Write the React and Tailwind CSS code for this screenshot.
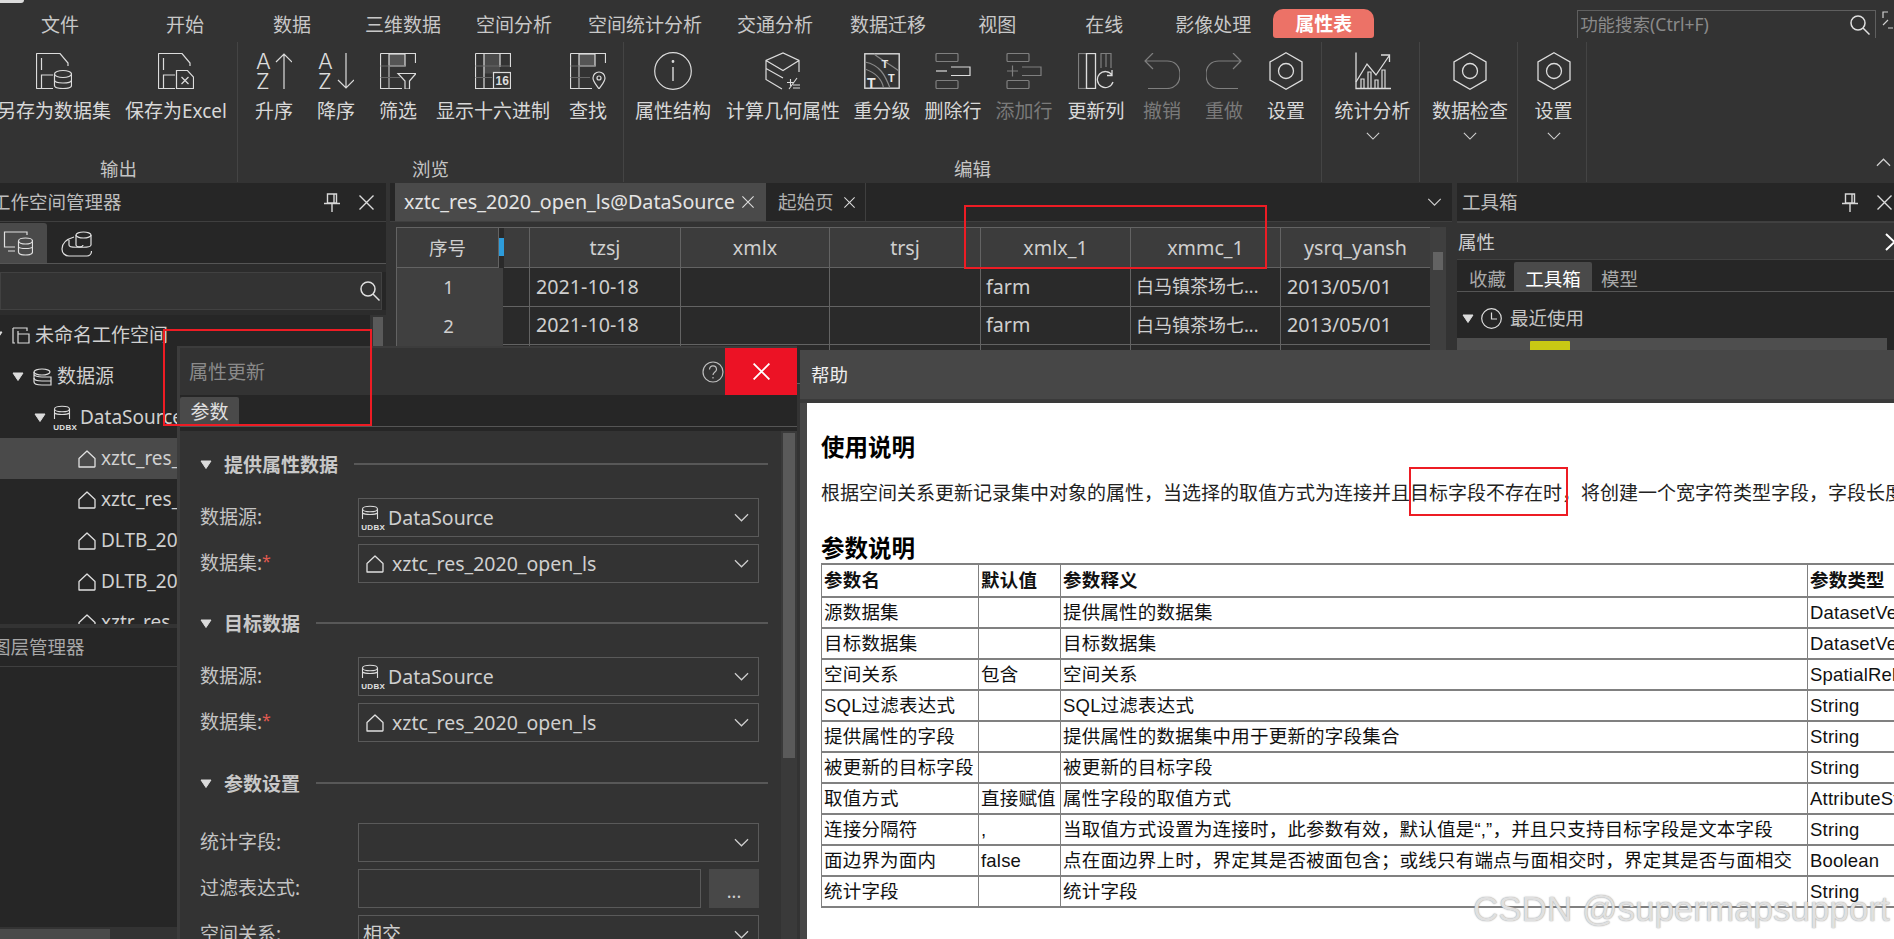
const S = ({ c = "#dcdcdc", w = 36, h = 36, sw = 1.2, vb = "0 0 36 36", children }) => (
  <svg width={w} height={h} viewBox={vb} fill="none" stroke={c} strokeWidth={sw} className="shrink-0 block">{children}</svg>
);
const G = "#7f7f7f";
const DocBase = ({ top = 13 }) => (
  <path d={`M17 35.5H1a.5.5 0 0 1-.5-.5V1A.5.5 0 0 1 1 .5H24L32 10V${top}M5.5 5V17M17 22H5.5V35.5`} />
);
const FileDb = () => (
  <S><DocBase /><ellipse cx="27" cy="21" rx="8.5" ry="3.5" /><path d="M18.500 21V32.500C18.500 34.500 22 35.500 27 35.500S35.500 34.500 35.500 32.500V21M18.500 27C18.500 29 22 30 27 30S35.500 29 35.500 27" /></S>
);
const FileX = () => (
  <S><DocBase /><path d="M18.500 35.500V17.500H29.500L35.500 24V35.500Z" /><path d="M23.500 24L30.500 31M30.500 24L23.500 31" /></S>
);
const SortIcon = ({ up }) => (
  <S>
    <text x="0" y="16" fontSize="22" fill="#dcdcdc" stroke="none" fontFamily="Inter" fontWeight="300">A</text>
    <text x="0" y="35.500" fontSize="22" fill="#dcdcdc" stroke="none" fontFamily="Inter" fontWeight="300">Z</text>
    {up ? <path d="M28 36V1M20 9L28 1L36 9" /> : <path d="M28 0V35M20 27L28 35L36 27" />}
  </S>
);
const TableBase = () => (
  <>
    <rect x="9" y="1" width="16" height="12" fill="#555" stroke="#dcdcdc" />
    <path d="M.5 .5H35.500V10M.5 .5V35.500H22" />
    <path d="M9 13V35.500" stroke="#bbb" />
    <path d="M.5 13H25M.5 24.500H20" stroke="#666" />
  </>
);
const Filter = () => (
  <S><TableBase /><path d="M18 20.500H36L29.500 28V36H25V28Z" /></S>
);
const Hex16 = () => (
  <S>
    <rect x="9" y=".5" width="16" height="20" fill="#4a4a4a" stroke="none" />
    <path d="M.5 .5H35.500V14M.5 .5V35.500H18M9 .5V35.500M25 .5V14" />
    <path d="M.5 13H35M.5 24.500H17" stroke="#666" />
    <rect x="18.500" y="19.500" width="17" height="16" />
    <text x="20.500" y="32" fontSize="12" fontWeight="700" fill="#dcdcdc" stroke="none" fontFamily="Liberation Sans">16</text>
  </S>
);
const Locate = () => (
  <S><TableBase />
    <path d="M29 36C26 31.500 23 28.500 23 25A6 6 0 0 1 35 25C35 28.500 32 31.500 29 36Z" fill="#333" />
    <circle cx="29" cy="25" r="2" />
  </S>
);
const Info = () => (
  <S w={38} h={38} vb="0 0 38 38"><circle cx="19" cy="19" r="18.300" /><path d="M19 15V29" strokeWidth="1.400" /><circle cx="19" cy="9.500" r=".8" fill="#dcdcdc" /></S>
);
const Cube = () => (
  <S w={36} h={38} vb="0 0 36 38">
    <path d="M18 26L1 16.500V8.500L18 1L34 8.500V20M1 8.500L18 18.500L34 8.500M1 10V27.500L17 37" />
    <path d="M22 30.500H29M25.500 27V34M24 37L32 26M28 36H35M28 33H35" strokeWidth="1.100" />
  </S>
);
const Reclass = () => (
  <S>
    <rect x=".8" y=".8" width="34.400" height="34.400" strokeWidth="1.400" />
    <path d="M1 9C16 12 21 22 26 35M1 16C12 20 18 26 19.500 35M10 1C19 8 27 12 35 18" stroke="#888" />
    <text x="17.500" y="15" fontSize="11" fontWeight="700" fill="#e6e6e6" stroke="none" fontFamily="Liberation Sans">T</text>
    <text x="24" y="29" fontSize="11" fontWeight="700" fill="#e6e6e6" stroke="none" fontFamily="Liberation Sans">T</text>
    <text x="3" y="35" fontSize="14" fontWeight="700" fill="#e6e6e6" stroke="none" fontFamily="Liberation Sans">T</text>
  </S>
);
const RowEdit = ({ c, plus }) => (
  <S c={c}>
    <rect x="1" y=".5" width="22" height="8" rx="1" stroke={G} />
    <rect x="1" y="27.500" width="22" height="8" rx="1" stroke={G} />
    <path d="M16 14H35V22.500H16" />
    {plus ? <path d="M1 18H12M6.500 12.500V23.500" /> : <path d="M1 18H12" />}
  </S>
);
const UpdateCol = () => (
  <S>
    <rect x=".5" y=".5" width="8" height="35" stroke={G} />
    <rect x="8.500" y=".5" width="9" height="35" strokeWidth="1.300" />
    <path d="M23 15V.5H33V15M28 .5V14" stroke={G} />
    <path d="M34 22A8 8 0 1 0 35 29M34 17V22.500H29" strokeWidth="1.300" />
  </S>
);
const Undo = ({ redo }) => (
  <S c={G}>
    {redo
      ? <path d="M35 8H13C5 8 0 13 0 21.500S5 35.500 13 35.500H32M27 0L35 8L27 16" />
      : <path d="M1 8H23C31 8 36 13 36 21.500S31 35.500 23 35.500H4M9 0L1 8L9 16" />}
  </S>
);
const Hex = ({ c = "#dcdcdc" }) => (
  <S c={c} w={36} h={38} vb="0 0 36 38">
    <path d="M18 .8L34 10V28L18 37.200L2 28V10Z" strokeWidth="1.300" /><circle cx="18" cy="19" r="7.500" strokeWidth="1.300" />
  </S>
);
const Chart = () => (
  <S w={38} h={38} vb="0 0 38 38">
    <path d="M2 .5V36.500H37" strokeWidth="1.300" />
    <path d="M2 30L13 12L22 23L35 4M27 3H35.500V10" strokeWidth="1.300" />
    <path d="M7 36V27H10V36M14 36V20H17V36M21 36V28H24V36M28 36V18H31V36" />
  </S>
);
const Chevron = ({ c = "#cfcfcf", w = 16, h = 9 }) => (
  <svg width={w} height={h} viewBox="0 0 16 9" fill="none" stroke={c} strokeWidth="1.300" className="block shrink-0"><path d="M1 1L8 8L15 1" /></svg>
);
const Pin = () => (
  <S w={16} h={19} vb="0 0 16 19" c="#d8d8d8" sw={1.400}>
    <path d="M3.500 1H12.500V10H3.500ZM10 1V10M0 10.500H16M8 11V19" />
  </S>
);
const Close = ({ s = 15, c = "#dcdcdc", sw = 1.400 }) => (
  <svg width={s} height={s} viewBox="0 0 15 15" fill="none" stroke={c} strokeWidth={sw} className="block shrink-0"><path d="M.5 .5L14.500 14.500M14.500 .5L.5 14.500" /></svg>
);
const SearchI = () => (
  <S w={20} h={20} vb="0 0 20 20" c="#e0e0e0" sw={1.500}><circle cx="8" cy="8" r="7" /><path d="M13 13L19.500 19.500" /></S>
);
const Caret = () => (
  <svg width="12" height="9" viewBox="0 0 12 9" className="block shrink-0"><path d="M1 1H11L6 8.500Z" fill="#dcdcdc" stroke="#dcdcdc" strokeLinejoin="round" /></svg>
);
const Ds = ({ w = 18, h = 18, c = "#e0e0e0" }) => (
  <S w={w} h={h} vb="0 0 18 18" c={c} sw={1.300}><path d="M1 17V8.500L9 1L17 8.500V16.500C17 16.800 16.800 17 16.500 17Z" strokeLinejoin="round" /></S>
);
const Udbx = () => (
  <svg width="24" height="26" viewBox="0 0 24 26" fill="none" stroke="#dcdcdc" strokeWidth="1.100" className="block shrink-0">
    <ellipse cx="9" cy="4" rx="7.500" ry="2.800" />
    <path d="M1.500 4V14M16.500 4V14M1.500 8C4 10 14 10 16.500 8" />
    <text x=".3" y="24.500" fontSize="8" fontWeight="700" fill="#e0e0e0" stroke="none" fontFamily="Liberation Sans" letterSpacing=".3">UDBX</text>
  </svg>
);

const tabs = [
  ["文件", "ml-[41px]"], ["开始", "ml-[87px]"], ["数据", "ml-[69px]"], ["三维数据", "ml-[54px]"], ["空间分析", "ml-[35px]"],
  ["空间统计分析", "ml-[36px]"], ["交通分析", "ml-[35px]"], ["数据迁移", "ml-[37px]"], ["视图", "ml-[52px]"], ["在线", "ml-[69px]"], ["影像处理", "ml-[52px]"],
];

const Item = ({ w, icon, label, gray, drop }) => (
  <div className={`${w} shrink-0 flex flex-col items-center`}>
    <div className="h-[38px] flex items-center">{icon}</div>
    <div className={`mt-[8px] h-[26px] leading-[26px] whitespace-nowrap text-[19px] ${gray ? "text-[#7a7a7a]" : "text-[#d8d8d8]"}`}>{label}</div>
    {drop && <div className="mt-[8px]"><Chevron w={14} h={8} c="#d0d0d0" /></div>}
  </div>
);
const Group = ({ w, label, children }) => (
  <div className={`${w} shrink-0 h-[140px] border-r border-[#444] relative flex`}>
    {children}
    {label && <div className="absolute left-0 right-0 bottom-0 text-center text-[18.5px] leading-[26px] text-[#c4c4c4]">{label}</div>}
  </div>
);

const TreeRow = ({ pl, caret, icon, text, sel, caretCls = "mr-[9px]", textCls = "ml-[5px]" }) => (
  <div className={`h-[41px] shrink-0 flex items-center whitespace-nowrap text-[19px] text-[#d0d0d0] ${pl} ${sel ? "bg-[#4a4a4a]" : ""}`}>
    {caret && <span className={caretCls}><Caret /></span>}
    {icon}
    <span className={textCls}>{text}</span>
  </div>
);

const Field = ({ children, w = "w-[401px]" }) => (
  <div className={`${w} h-[39px] border border-[#5a5a5a] flex items-center pl-[2px] pr-[9px] shrink-0`}>
    {children}
  </div>
);
const Line = ({ label, star, children, cls = "mt-[7px]" }) => (
  <div className={`flex items-center ${cls}`}>
    <div className="w-[158px] shrink-0 text-[19px] text-[#c4c4c4] whitespace-nowrap">{label}{star && <span className="text-[#e05a50] align-top text-[16px]">*</span>}</div>
    {children}
  </div>
);
const Sec = ({ title, cls = "" }) => (
  <div className={`h-[28px] flex items-center ${cls}`}>
    <Caret />
    <div className="ml-[12px] pt-[3px] font-bold text-[19px] text-[#c8c8c8] whitespace-nowrap">{title}</div>
    <div className="flex-1 h-[2px] bg-[#585858] ml-[16px] mr-[13px]"></div>
  </div>
);
const UdbxVal = () => (
  <>
    <Udbx />
    <span className="ml-[3px] text-[19.5px] text-[#cfcfcf] flex-1">DataSource</span>
    <Chevron w={15} h={9} />
  </>
);
const DsVal = () => (
  <>
    <span className="ml-[5px]"><Ds /></span>
    <span className="ml-[8px] text-[19.5px] text-[#cfcfcf] flex-1">xztc_res_2020_open_ls</span>
    <Chevron w={15} h={9} />
  </>
);

const Cell = ({ children, cls = "", size = "text-[19.7px]" }) => (
  <div className={`border-r border-b border-[#636363] flex items-center overflow-hidden whitespace-nowrap text-[#cfcfcf] ${size} ${cls}`}>{children}</div>
);
const Row = ({ n }) => (
  <div className="grid grid-cols-[106px_27px_151px_149px_151px_150px_150px_150px] h-[38.500px]">
    <div className="bg-[#404040] flex items-center justify-center text-[18.5px] text-[#cfcfcf] pr-[3px]">{n}</div>
    <Cell cls="bg-[#2a2a2a]" />
    <Cell cls="bg-[#2a2a2a] pl-[6px]">2021-10-18</Cell>
    <Cell cls="bg-[#2a2a2a]" />
    <Cell cls="bg-[#2a2a2a]" />
    <Cell cls="bg-[#2a2a2a] pl-[5px]">farm</Cell>
    <Cell cls="bg-[#2a2a2a] pl-[5px]" size="text-[18px]">白马镇茶场七...</Cell>
    <Cell cls="bg-[#2a2a2a] pl-[6px]">2013/05/01</Cell>
  </div>
);

const helpRows = [
  ["源数据集", "", "提供属性的数据集", "DatasetVector"],
  ["目标数据集", "", "目标数据集", "DatasetVector"],
  ["空间关系", "包含", "空间关系", "SpatialRelationship"],
  ["SQL过滤表达式", "", "SQL过滤表达式", "String"],
  ["提供属性的字段", "", "提供属性的数据集中用于更新的字段集合", "String"],
  ["被更新的目标字段", "", "被更新的目标字段", "String"],
  ["取值方式", "直接赋值", "属性字段的取值方式", "AttributeStatisticsMode"],
  ["连接分隔符", ",", "当取值方式设置为连接时，此参数有效，默认值是“,”，并且只支持目标字段是文本字段", "String"],
  ["面边界为面内", "false", "点在面边界上时，界定其是否被面包含；或线只有端点与面相交时，界定其是否与面相交", "Boolean"],
  ["统计字段", "", "统计字段", "String"],
];
const Td = ({ children, Tag = "td" }) => (
  <Tag className={`border-x border-y-2 border-[#808080] px-[2px] py-0 overflow-hidden whitespace-nowrap text-left text-[18.5px] tracking-[.2px] ${Tag === "th" ? "font-bold" : "font-normal"}`}>{children}</Tag>
);

const Red = ({ cls }) => <div className={`absolute border-2 border-[#ed1c24] pointer-events-none ${cls}`}></div>;

export default function App() {
  return (
    <div className="relative w-[1894px] h-[939px] overflow-hidden bg-[#333333] text-[#d0d0d0] font-['Noto_Sans','Noto_Sans_CJK_SC',sans-serif]">
      <div className="absolute left-0 top-0 w-[24px] h-[3px] bg-[#dcdcdc] rounded-br-[4px]"></div>

      <div className="h-[38px] flex items-end text-[19px] text-[#c8c8c8]">
        {tabs.map(([t, m]) => (
          <div key={t} className={`${m} h-[38px] leading-[50px] whitespace-nowrap pb-[2px]`}>{t}</div>
        ))}
        <div className="ml-[22px] w-[101px] h-[29px] bg-[#ec7267] rounded-t-[10px] rounded-b-[3px] text-center text-white font-bold leading-[31px]">属性表</div>
        <div className="ml-[203px] w-[299px] h-[28px] border-x border-t border-[#5f5f5f] flex items-center pl-[2px] pr-[5px] text-[#8a8a8a] text-[17.5px]">
          <span className="flex-1 whitespace-nowrap">功能搜索(Ctrl+F)</span>
          <SearchI />
        </div>
        <div className="ml-[6px] mb-[9px]">
          <svg width="12" height="18" viewBox="0 0 12 18" fill="none" stroke="#d0d0d0" strokeWidth="1.200" className="block"><path d="M6 1H1V7M11 17H6M1 14L6 9" /></svg>
        </div>
      </div>

      <div className="h-[145px] pt-[4px] flex relative">
        <Group w="w-[238px]" label="输出">
          <div className="flex pt-[10px]">
            <Item w="w-[108px]" icon={<FileDb />} label="另存为数据集" />
            <Item w="w-[108px] ml-[14px]" icon={<FileX />} label="保存为Excel" />
          </div>
        </Group>
        <Group w="w-[386px]" label="浏览">
          <div className="flex pt-[10px] pl-[5px]">
            <Item w="w-[62px]" icon={<SortIcon up />} label="升序" />
            <Item w="w-[62px]" icon={<SortIcon />} label="降序" />
            <Item w="w-[62px]" icon={<Filter />} label="筛选" />
            <Item w="w-[128px]" icon={<Hex16 />} label="显示十六进制" />
            <Item w="w-[62px]" icon={<Locate />} label="查找" />
          </div>
        </Group>
        <Group w="w-[698px]" label="编辑">
          <div className="flex pt-[10px]">
            <Item w="w-[98px]" icon={<Info />} label="属性结构" />
            <Item w="w-[122px]" icon={<Cube />} label="计算几何属性" />
            <Item w="w-[76px]" icon={<Reclass />} label="重分级" />
            <Item w="w-[66px]" icon={<RowEdit c="#dcdcdc" />} label="删除行" />
            <Item w="w-[76px]" icon={<RowEdit c={G} plus />} label="添加行" gray />
            <Item w="w-[68px]" icon={<UpdateCol />} label="更新列" />
            <Item w="w-[64px]" icon={<Undo />} label="撤销" gray />
            <Item w="w-[60px]" icon={<Undo redo />} label="重做" gray />
            <Item w="w-[64px]" icon={<Hex />} label="设置" />
          </div>
        </Group>
        <Group w="w-[98px]">
          <div className="flex pt-[10px] pl-[3px]"><Item w="w-[95px]" icon={<Chart />} label="统计分析" drop /></div>
        </Group>
        <Group w="w-[98px]">
          <div className="flex pt-[10px] pl-[2px]"><Item w="w-[96px]" icon={<Hex />} label="数据检查" drop /></div>
        </Group>
        <Group w="w-[69px]">
          <div className="flex pt-[10px] pl-[2px]"><Item w="w-[67px]" icon={<Hex />} label="设置" drop /></div>
        </Group>
        <div className="ml-auto mr-[3px] mt-[116px]"><svg width="15" height="9" viewBox="0 0 16 9" fill="none" stroke="#d0d0d0" strokeWidth="1.300" className="block"><path d="M1 8L8 1L15 8" /></svg></div>
      </div>

      <div className="h-[756px] flex">
        {/* left column */}
        <div className="w-[386px] shrink-0 flex flex-col bg-[#262626]">
          <div className="h-[39px] shrink-0 border-b border-[#3f3f3f] flex items-center text-[18.5px] text-[#bdbdbd]">
            <span className="-ml-[8px] whitespace-nowrap">工作空间管理器</span>
            <span className="ml-[202px]"><Pin /></span>
            <span className="ml-[19px]"><Close /></span>
          </div>
          <div className="h-[42px] shrink-0 border-b border-[#555] flex items-end">
            <div className="w-[47px] h-[40px] bg-[#4a4a4a] rounded-tr-[3px] flex items-center pl-[3px]">
              <S w={30} h={26} vb="0 0 30 26" c="#e0e0e0"><path d="M24 5V2H1.500V17H12M5 21H12" /><ellipse cx="22.500" cy="11" rx="7" ry="3" /><path d="M15.500 11V22C15.500 24 19 25 22.500 25S29.500 24 29.500 22V11M15.500 17C17 19 28 19 29.500 17" /></S>
            </div>
            <div className="ml-[14px] mb-[6px]">
              <S w={31} h={26} vb="0 0 31 26" c="#e0e0e0"><path d="M13 6C6 8 1 12 1 18C1 22 4 25 8 25H26C28.500 25 30.500 23 30.500 20M8 9V14C8 17 22 17 22 14" /><ellipse cx="22.500" cy="4" rx="7.500" ry="3" /><path d="M15 4V14C15 17 30 17 30 14V4" /></S>
            </div>
          </div>
          <div className="h-[8px] shrink-0 bg-[#2c2c2c]"></div>
          <div className="h-[38px] w-[382px] shrink-0 bg-[#333] border border-[#414141] flex items-center justify-end pr-[1px]"><SearchI /></div>
          <div className="h-[5px] shrink-0 bg-[#2c2c2c]"></div>
          <div className="h-[309px] shrink-0 flex overflow-hidden">
            <div className="flex-1 flex flex-col overflow-hidden">
              <TreeRow pl="pl-0" caret caretCls="-ml-[9px] mr-[9px]" icon={<S w={18} h={18} vb="0 0 18 18" c="#dcdcdc"><path d="M1 1H15V4M1 1V16H3M6 16H17V7H6ZM6 16V4" /></S>} text="未命名工作空间" />
              <TreeRow pl="pl-[12px]" caret icon={<S w={19} h={18} vb="0 0 19 18" c="#dcdcdc"><ellipse cx="9" cy="4" rx="8" ry="3" /><path d="M1 4V14C1 16 4 17 9 17H18V9H9C5 9 1 8 1 6" /><path d="M1 10C1 12 4 13 9 13H18" /></S>} text="数据源" />
              <TreeRow pl="pl-[34px]" caret caretCls="mr-[7px]" textCls="ml-[3px]" icon={<Udbx />} text="DataSource" />
              <TreeRow sel pl="pl-[78px]" icon={<Ds />} text="xztc_res_2020_open_ls" />
              <TreeRow pl="pl-[78px]" icon={<Ds />} text="xztc_res_2020_open" />
              <TreeRow pl="pl-[78px]" icon={<Ds />} text="DLTB_2020_open" />
              <TreeRow pl="pl-[78px]" icon={<Ds />} text="DLTB_2021_open" />
              <TreeRow pl="pl-[78px]" icon={<Ds />} text="xztr_res_2020" />
            </div>
            <div className="w-[16px] shrink-0 bg-[#333] pt-[2px] px-[3px]"><div className="h-[80px] bg-[#5a5a5a]"></div></div>
          </div>
          <div className="h-[4px] shrink-0 bg-[#333]"></div>
          <div className="h-[39px] shrink-0 border-b border-[#3f3f3f] flex items-center text-[18.5px] text-[#a8a8a8]"><span className="-ml-[8px] whitespace-nowrap">图层管理器</span></div>
          <div className="flex-1"></div>
          <div className="h-[12px] shrink-0 bg-[#333] pt-[2px]"><div className="w-[110px] h-full bg-[#4a4a4a]"></div></div>
        </div>

        {/* center column */}
        <div className="ml-[4px] w-[1062px] shrink-0 flex flex-col">
          <div className="h-[39px] shrink-0 bg-[#262626] border-b border-[#3f3f3f] flex items-stretch pl-[5px]">
            <div className="w-[371px] bg-[#4a4a4a] flex items-center pl-[9px] text-[#e4e4e4] text-[19.7px]">
              <span className="whitespace-nowrap">xztc_res_2020_open_ls@DataSource</span>
              <span className="ml-auto mr-[12px]"><Close s={12} /></span>
            </div>
            <div className="w-[100px] border-r border-[#3f3f3f] flex items-center pl-[12px] text-[#b0b0b0] text-[18.5px]">
              <span className="whitespace-nowrap">起始页</span>
              <span className="ml-[10px]"><Close s={11} /></span>
            </div>
            <div className="ml-auto mr-[10px] self-center"><Chevron w={15} h={8} /></div>
          </div>
          <div className="h-[5px] shrink-0"></div>
          <div className="ml-[6px] flex">
            <div className="w-[1034px] shrink-0 border-t border-l border-[#636363]">
              <div className="grid grid-cols-[102px_5px_26px_151px_149px_151px_150px_150px_150px] h-[40px] bg-[#3c3c3c]">
                <Cell cls="justify-center" size="text-[18.5px]">序号</Cell>
                <div className="bg-[#2a2a2a] pt-[10px]"><div className="h-[18px] bg-[#2d9cdb]"></div></div>
                <Cell />
                <Cell cls="justify-center">tzsj</Cell>
                <Cell cls="justify-center">xmlx</Cell>
                <Cell cls="justify-center">trsj</Cell>
                <Cell cls="justify-center">xmlx_1</Cell>
                <Cell cls="justify-center">xmmc_1</Cell>
                <Cell cls="justify-center">ysrq_yansh</Cell>
              </div>
              <Row n="1" />
              <Row n="2" />
              <Row n="3" />
            </div>
            <div className="w-[16px] shrink-0 bg-[#3f3f3f] pt-[25px] px-[3px]"><div className="h-[18px] bg-[#636363]"></div></div>
          </div>
        </div>

        {/* right column */}
        <div className="ml-[5px] w-[437px] shrink-0 flex flex-col bg-[#262626]">
          <div className="h-[39px] shrink-0 border-b border-[#3f3f3f] flex items-center text-[18.5px] text-[#bdbdbd]">
            <span className="ml-[5px] whitespace-nowrap">工具箱</span>
            <span className="ml-[324px]"><Pin /></span>
            <span className="ml-[19px]"><Close /></span>
          </div>
          <div className="h-[38px] shrink-0 bg-[#333] border-y border-[#414141] flex items-center text-[18.5px] text-[#cfcfcf] pt-[1px]">
            <span className="ml-[1px]">属性</span>
            <span className="ml-auto -mr-[2px]"><svg width="11" height="18" viewBox="0 0 11 18" fill="none" stroke="#ffffff" strokeWidth="2" className="block"><path d="M1 1L9.500 9L1 17" /></svg></span>
          </div>
          <div className="h-[32px] shrink-0 border-b border-[#555] flex items-end text-[18.5px] text-[#a8a8a8]">
            <span className="ml-[12px] h-[29px] leading-[33px]">收藏</span>
            <span className="ml-[8px] w-[78px] h-[29px] leading-[33px] bg-[#4a4a4a] text-center text-white rounded-t-[2px]">工具箱</span>
            <span className="ml-[9px] h-[29px] leading-[33px]">模型</span>
          </div>
          <div className="h-[46px] shrink-0 flex items-center text-[18.5px] text-[#c4c4c4] pl-[5px] pr-[7px] pt-[6px]">
            <Caret />
            <span className="ml-[7px]"><S w={21} h={21} vb="0 0 21 21" c="#dcdcdc"><circle cx="10.500" cy="10.500" r="9.800" /><path d="M10.500 4.500V11H16" /></S></span>
            <span className="ml-[8px]">最近使用</span>
          </div>
          <div className="h-[13px] shrink-0 bg-[#4e4e4e] pl-[73px] pt-[3px] mr-[7px]"><div className="w-[40px] h-full bg-[#c8c814] rounded-t-[1px]"></div></div>
        </div>
      </div>

      {/* 属性更新 dialog */}
      <div className="absolute left-[177px] top-[346px] w-[620px] h-[593px] bg-[#333] border-l-[3px] border-t-2 border-[#3c3c3c] flex flex-col">
        <div className="h-[47px] shrink-0 flex items-center text-[19px] text-[#8a8a8a]">
          <span className="ml-[9px] pt-[1px]">属性更新</span>
          <span className="ml-auto mr-[1px]"><svg width="22" height="22" viewBox="0 0 22 22" fill="none" stroke="#bdbdbd" strokeWidth="1.200" className="block"><circle cx="11" cy="11" r="10" /><path d="M7.500 8.500C7.500 3.500 14.500 4 14.500 8.500C14.500 11 11 11 11 14M11 16V17.500" /></svg></span>
          <div className="w-[72px] h-[47px] bg-[#ec1225] flex items-center justify-center"><Close s={17} c="#ffffff" sw={1.600} /></div>
        </div>
        <div className="h-[32px] shrink-0 bg-[#262626] border-b border-[#555] flex items-end">
          <div className="w-[59px] h-[29px] bg-[#4a4a4a] rounded-t-[2px] text-center text-[19px] leading-[30px] text-[#e0e0e0]">参数</div>
        </div>
        <div className="h-[4px] shrink-0 bg-[#262626]"></div>
        <div className="flex-1 flex min-h-0 overflow-hidden">
          <div className="w-[601px] pl-[20px] pt-[19px] overflow-hidden shrink-0">
            <Sec title="提供属性数据" />
            <Line label="数据源:" cls="mt-[20px]"><Field><UdbxVal /></Field></Line>
            <Line label="数据集:" star><Field><DsVal /></Field></Line>
            <Sec title="目标数据" cls="mt-[26px]" />
            <Line label="数据源:" cls="mt-[20px]"><Field><UdbxVal /></Field></Line>
            <Line label="数据集:" star><Field><DsVal /></Field></Line>
            <Sec title="参数设置" cls="mt-[27px]" />
            <Line label="统计字段:" cls="mt-[26px]"><Field><span className="flex-1"></span><Chevron w={15} h={9} /></Field></Line>
            <Line label="过滤表达式:">
              <Field w="w-[343px]"></Field>
              <div className="ml-[8px] w-[50px] h-[39px] bg-[#484848] flex items-center justify-center text-[18px] text-[#d0d0d0] leading-[39px] pt-[6px]">...</div>
            </Line>
            <Line label="空间关系:"><Field><span className="flex-1 text-[19px] text-[#cfcfcf] ml-[2px]">相交</span><Chevron w={15} h={9} /></Field></Line>
          </div>
          <div className="w-[16px] shrink-0 bg-[#3a3a3a] pt-[2px] px-[2px]"><div className="h-[325px] bg-[#5a5a5a]"></div></div>
        </div>
      </div>

      {/* 帮助 window */}
      <div className="absolute left-[800px] top-[350px] w-[1094px] h-[589px] bg-[#474747] flex flex-col">
        <div className="h-[49px] shrink-0 flex items-center pl-[11px] text-[18.5px] text-[#eeeeee]">帮助</div>
        <div className="h-[4px] shrink-0 bg-[#3a3a3a]"></div>
        <div className="flex-1 min-h-0 ml-[7px] bg-white text-black pl-[14px] pt-[31px] overflow-hidden font-['Liberation_Sans','Noto_Sans_CJK_SC',sans-serif]">
          <div className="h-[28px] leading-[28px] text-[23.5px] font-bold">使用说明</div>
          <div className="mt-[18px] h-[28px] leading-[28px] text-[19px] whitespace-nowrap text-[#222]">根据空间关系更新记录集中对象的属性，当选择的取值方式为连接并且目标字段不存在时，将创建一个宽字符类型字段，字段长度为255。</div>
          <div className="mt-[27px] h-[28px] leading-[28px] text-[23.5px] font-bold">参数说明</div>
          <table className="table-fixed border-collapse w-[1140px] text-[#111]">
            <colgroup>
              <col className="w-[157px]" /><col className="w-[82px]" /><col className="w-[747px]" /><col className="w-[154px]" />
            </colgroup>
            <thead>
              <tr className="h-[33px]"><Td Tag="th">参数名</Td><Td Tag="th">默认值</Td><Td Tag="th">参数释义</Td><Td Tag="th">参数类型</Td></tr>
            </thead>
            <tbody>
              {helpRows.map((r) => (
                <tr key={r[0]} className="h-[31px]">{r.map((c, i) => <Td key={i}>{c}</Td>)}</tr>
              ))}
            </tbody>
          </table>
          <div className="mt-[32px] h-[28px] leading-[28px] text-[23.5px] font-bold">输出结果</div>
        </div>
      </div>

      <div className="absolute left-[1473px] top-[884px] text-[35px] leading-[50px] whitespace-nowrap text-[#e0e0e0] [text-shadow:0_0_1.5px_#8a8a8a] font-['Liberation_Sans',sans-serif] pointer-events-none">CSDN @supermapsupport</div>

      <Red cls="left-[163px] top-[329px] w-[209px] h-[97px]" />
      <Red cls="left-[964px] top-[205px] w-[303px] h-[64px]" />
      <Red cls="left-[1409px] top-[467px] w-[159px] h-[49px]" />
    </div>
  );
}
